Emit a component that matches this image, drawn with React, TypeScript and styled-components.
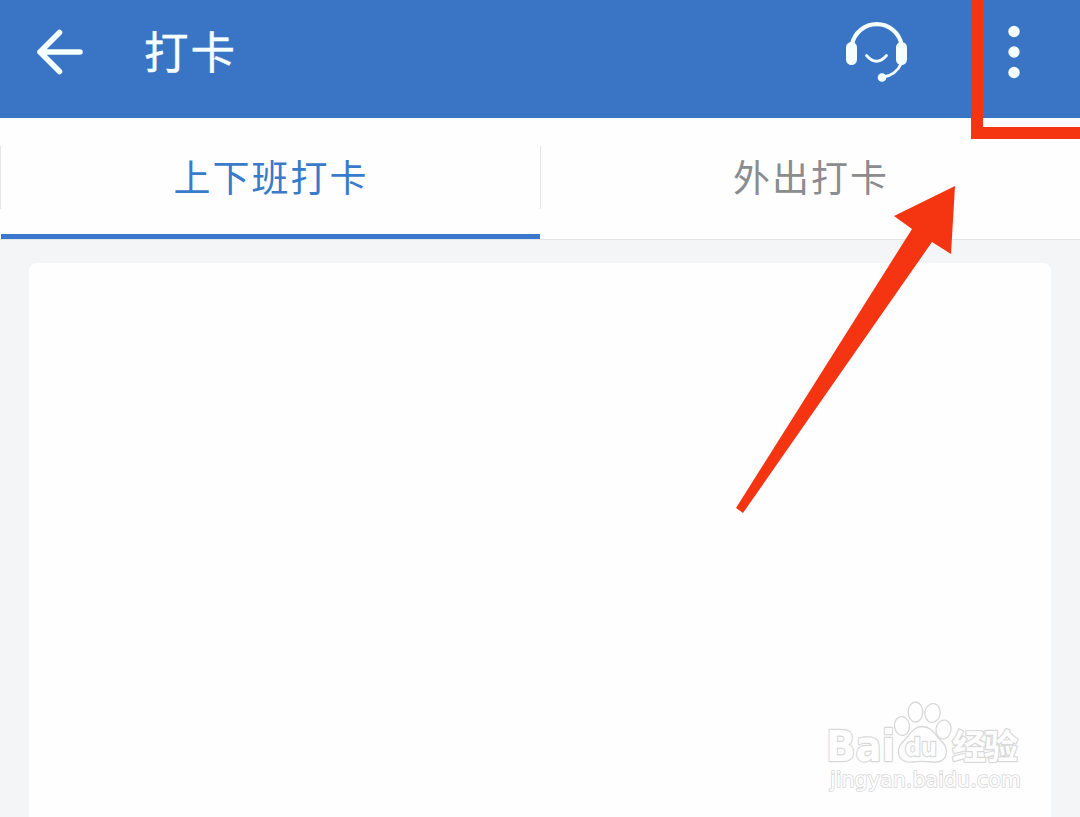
import React, { useState } from 'react'
import styled, { createGlobalStyle } from 'styled-components'

const RED = '#f53512'
const ICON = '#f5ffff'

const GlobalStyle = createGlobalStyle`
  * {
    box-sizing: border-box;
  }

  body {
    margin: 0;
    overflow: hidden;
    font-family: 'Noto Sans CJK SC', sans-serif;
  }
`

const Screen = styled.div`
  position: relative;
  display: flex;
  flex-direction: column;
  width: 1080px;
  height: 817px;
  overflow: hidden;
  background: #f3f5f7;
`

const Header = styled.header`
  display: flex;
  align-items: center;
  height: 118px;
  padding: 0 60px 14px 32px;
  background: #3a75c5;
`

const Title = styled.h1`
  flex: 1;
  margin: 0 0 5px 56px;
  font-size: 44.5px;
  line-height: 60px;
  letter-spacing: 2px;
  font-weight: 400;
  color: ${ICON};
  -webkit-text-stroke: 0.4px ${ICON};
`

const IconButton = styled.button`
  display: flex;
  padding: 0;
  border: 0;
  background: none;
`

const MenuButton = styled(IconButton)`
  margin-left: 100px;
`

const Tabs = styled.nav`
  display: flex;
  height: 122px;
  background: #fefefe;
  border-bottom: 1px solid #e0e4e9;
`

const Tab = styled.button<{ $active: boolean }>`
  display: flex;
  flex: 1;
  flex-direction: column;
  align-items: center;
  justify-content: space-between;
  height: 121px;
  padding: 27px 0 0;
  border: 0;
  background: linear-gradient(#e3e5e8, #e3e5e8) 0 28px / 1px 63px no-repeat;
  font-family: inherit;
  font-size: 37px;
  line-height: 62px;
  letter-spacing: 2px;
  text-indent: 2px;
  color: ${p => (p.$active ? '#3a7acb' : '#8b8c8e')};

  &::after {
    content: '';
    width: calc(100% - 1px);
    height: 5px;
    margin-left: 1px;
    background: ${p => (p.$active ? '#3a78cc' : 'transparent')};
  }
`

const Content = styled.main`
  display: flex;
  flex: 1;
  padding: 23px 29px 0;
`

const Card = styled.section`
  flex: 1;
  border-radius: 8px 8px 0 0;
  background: #fefefe;
`

const HighlightBox = styled.div`
  position: absolute;
  top: -12px;
  left: 971px;
  width: 130px;
  height: 151px;
  border: 12px solid ${RED};
`

const Arrow = styled.svg`
  position: absolute;
  top: 180px;
  left: 730px;
`

const Watermark = styled.svg`
  position: absolute;
  top: 695px;
  left: 820px;
  fill: #fefefe;
  stroke: #d8d8d8;
  stroke-width: 1.3;
`

const WatermarkText = styled.text<{ $outline?: number }>`
  stroke-width: ${p => p.$outline || 2.4};
  stroke-linejoin: round;
  paint-order: stroke;
  font-family: 'DejaVu Sans', 'Noto Sans CJK SC', sans-serif;
`

const WatermarkCjk = styled(WatermarkText)`
  font-family: 'Noto Sans CJK SC', sans-serif;
`

const BackIcon = () => (
  <svg width="56" height="56" viewBox="0 0 56 56" fill="none" stroke={ICON}>
    <path
      d="M27.500 8.500L8 28l19.500 19.500M8 28h40"
      strokeWidth="5.500"
      strokeLinecap="round"
      strokeLinejoin="round"
    />
  </svg>
)

const ServiceIcon = () => (
  <svg width="62" height="64" viewBox="0 0 62 64" fill="none" stroke={ICON}>
    <path d="M6 24.500a25.200 25.200 0 0 1 49.500 0" strokeWidth="4.200" />
    <rect x="0" y="22" width="11" height="23" rx="5.500" fill={ICON} stroke="none" />
    <rect x="50" y="22" width="11" height="23" rx="5.500" fill={ICON} stroke="none" />
    <path d="M20.500 35.500q10 11.500 20 0" strokeWidth="2.800" strokeLinecap="round" />
    <path d="M55.500 43q-5 12-19.500 14.500" strokeWidth="2.800" />
    <circle cx="36" cy="57.500" r="4.300" fill={ICON} stroke="none" />
  </svg>
)

const MoreIcon = () => (
  <svg width="12" height="56" viewBox="0 0 12 56" fill={ICON}>
    <circle cx="6" cy="7.500" r="5.700" />
    <circle cx="6" cy="28" r="5.700" />
    <circle cx="6" cy="48.500" r="5.700" />
  </svg>
)

const BaiduWatermark = () => (
  <Watermark width="210" height="110" viewBox="0 0 210 110">
    <WatermarkText x="6" y="66" fontSize="42" fontWeight="700" textLength="69" lengthAdjust="spacingAndGlyphs">
      Bai
    </WatermarkText>
    <ellipse cx="82" cy="31" rx="7.500" ry="9.500" transform="rotate(-8 82 31)" />
    <ellipse cx="95.500" cy="17" rx="7.300" ry="10" />
    <ellipse cx="112.500" cy="18" rx="7.600" ry="9.500" transform="rotate(10 112.500 18)" />
    <ellipse cx="123.500" cy="34.500" rx="7.500" ry="9.500" transform="rotate(8 123.500 34.500)" />
    <path d="M102 31.500c8 0 12 6 16 11 5 5 9 9 8.500 15-1 8-7 10.500-14 9.500-7-1-13-1-20 0s-13-2-14-9c-1-7 4-11 8-15 4-5 8-11.500 15.500-11.500z" />
    <WatermarkText x="85" y="61" fontSize="24" fontWeight="700" textLength="32" lengthAdjust="spacingAndGlyphs">
      du
    </WatermarkText>
    <WatermarkCjk x="132" y="64" fontSize="34" fontWeight="700" textLength="66">
      经验
    </WatermarkCjk>
    <WatermarkText x="10" y="92" fontSize="21.500" textLength="191" lengthAdjust="spacingAndGlyphs" $outline={1.7}>
      jingyan.baidu.com
    </WatermarkText>
  </Watermark>
)

const TABS = ['上下班打卡', '外出打卡']

export default () => {
  const [active, setActive] = useState(0)

  return (
    <Screen>
      <GlobalStyle />
      <Header>
        <IconButton aria-label="返回">
          <BackIcon />
        </IconButton>
        <Title>打卡</Title>
        <IconButton aria-label="客服">
          <ServiceIcon />
        </IconButton>
        <MenuButton aria-label="更多">
          <MoreIcon />
        </MenuButton>
      </Header>
      <Tabs>
        {TABS.map((label, i) => (
          <Tab key={label} $active={i === active} onClick={() => setActive(i)}>
            {label}
          </Tab>
        ))}
      </Tabs>
      <Content>
        <Card />
      </Content>
      <BaiduWatermark />
      <HighlightBox />
      <Arrow width="240" height="340" viewBox="730 180 240 340" fill={RED}>
        <path d="M955 186L951 254 932 242 743 513 736 508 912 229 894 216z" />
      </Arrow>
    </Screen>
  )
}
